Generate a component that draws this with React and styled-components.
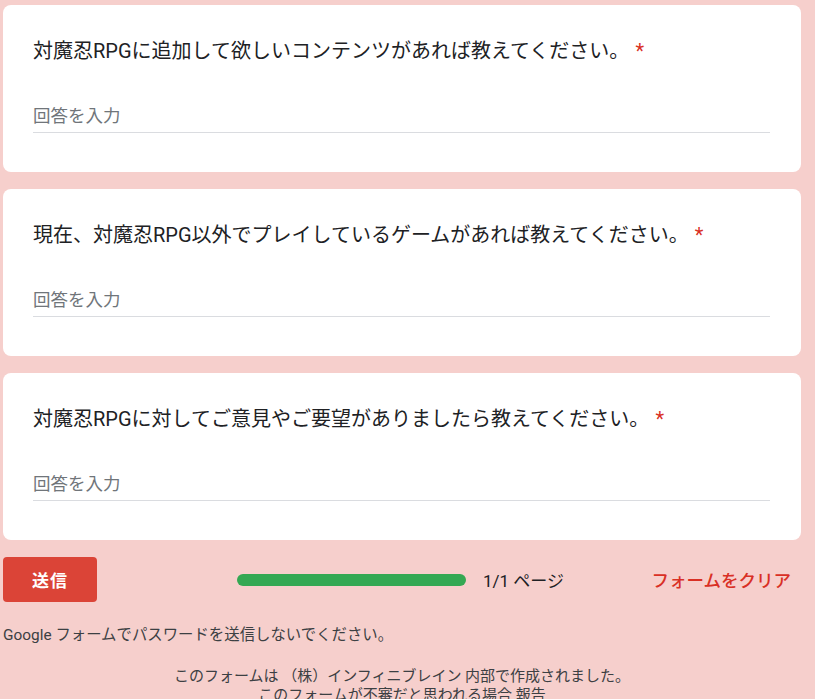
import styled, { createGlobalStyle } from 'styled-components';

const GlobalStyle = createGlobalStyle`
  html, body {
    margin: 0;
    padding: 0;
    background-color: #f6cfcc;
    overflow: hidden;
  }
  body {
    font-family: Roboto, 'Noto Sans CJK JP', sans-serif;
    color: #202124;
  }
`;

const questions = [
  '対魔忍RPGに追加して欲しいコンテンツがあれば教えてください。',
  '現在、対魔忍RPG以外でプレイしているゲームがあれば教えてください。',
  '対魔忍RPGに対してご意見やご要望がありましたら教えてください。',
];

const App = () => {
  return (
    <Page>
      <GlobalStyle />
      {questions.map(q => (
        <Card key={q}>
          <Title>
            {q}
            <Required>*</Required>
          </Title>
          <AnswerField>回答を入力</AnswerField>
        </Card>
      ))}
      <ActionRow>
        <SendButton>送信</SendButton>
        <Progress>
          <Bar />
          <PageLabel>1/1 ページ</PageLabel>
        </Progress>
        <ClearLink>フォームをクリア</ClearLink>
      </ActionRow>
      <Notice>Google フォームでパスワードを送信しないでください。</Notice>
      <Footer>
        <div>このフォームは （株）インフィニブレイン 内部で作成されました。</div>
        <div>このフォームが不審だと思われる場合 報告</div>
      </Footer>
    </Page>
  );
};

export default App;

const Page = styled.div`
  width: 798px;
  padding: 5px 0 0 3px;
  display: flex;
  flex-direction: column;
  gap: 17px;
`;

const Card = styled.div`
  box-sizing: border-box;
  height: 167px;
  padding: 34px 30px 0 30px;
  background-color: #fff;
  border-radius: 8px;
`;

const Title = styled.div`
  font-size: 20px;
  line-height: 24px;
  color: #202124;
`;

const Required = styled.span`
  color: #d93025;
  margin-left: 6px;
`;

const AnswerField = styled.div`
  margin-top: 41px;
  width: 737px;
  padding-bottom: 4px;
  border-bottom: 1px solid #dadce0;
  font-size: 17.5px;
  line-height: 24px;
  color: #70757a;
`;

const ActionRow = styled.div`
  display: flex;
  align-items: center;
  height: 45px;
`;

const SendButton = styled.button`
  width: 94px;
  height: 45px;
  border: none;
  border-radius: 4px;
  background-color: #db4437;
  color: #fff;
  font-family: inherit;
  font-size: 17px;
  font-weight: 700;
  letter-spacing: 1px;
`;

const Progress = styled.div`
  display: flex;
  align-items: center;
  margin-left: 140px;
`;

const Bar = styled.div`
  width: 229px;
  height: 12px;
  border-radius: 6px;
  background-color: #34a853;
`;

const PageLabel = styled.span`
  margin-left: 17px;
  font-size: 17px;
  color: #202124;
`;

const ClearLink = styled.span`
  margin-left: auto;
  margin-right: 10px;
  font-size: 17.5px;
  font-weight: 500;
  color: #d93025;
`;

const Notice = styled.div`
  margin-top: 6px;
  font-size: 15.4px;
  line-height: 20px;
  color: #3c4043;
`;

const Footer = styled.div`
  margin-top: 5px;
  text-align: center;
  font-size: 15px;
  line-height: 19px;
  color: #3c4043;
`;
